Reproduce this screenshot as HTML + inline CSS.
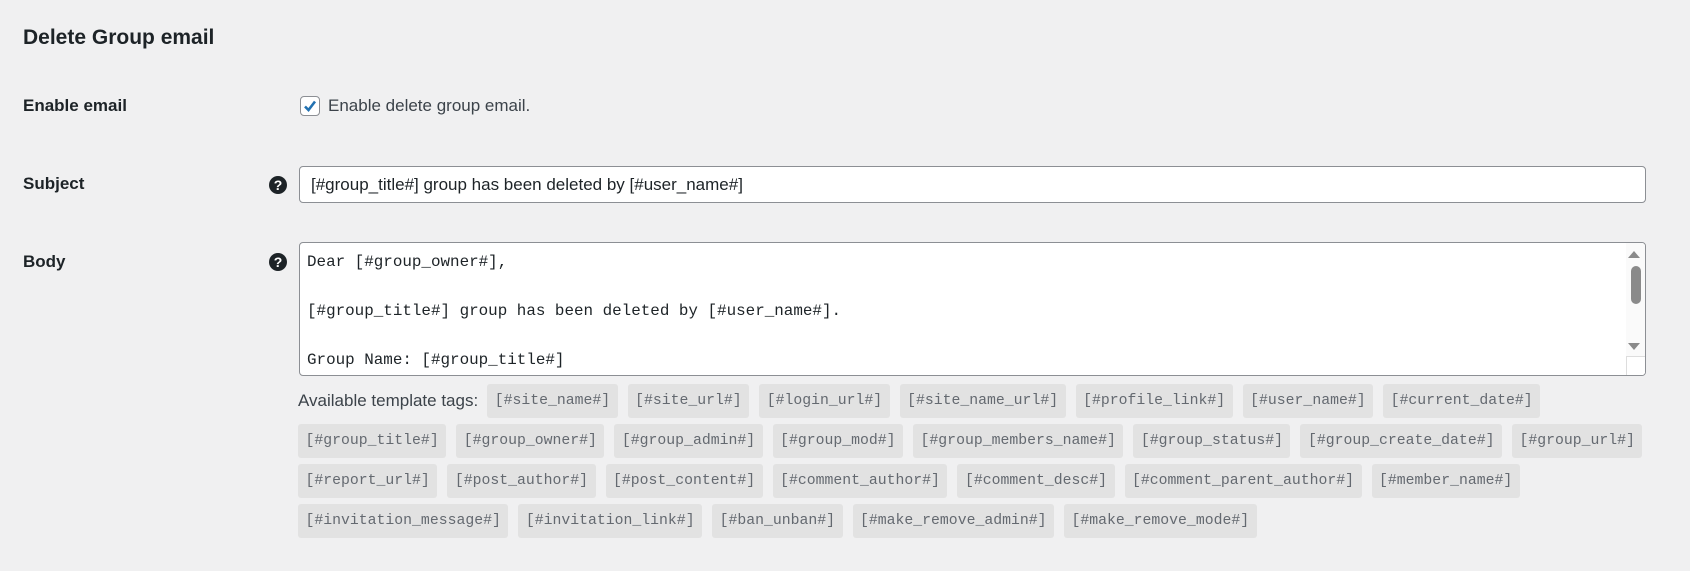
<!DOCTYPE html>
<html><head><meta charset="utf-8"><style>
body{margin:0;width:1690px;height:571px;background:#f0f0f1;font-family:"Liberation Sans",sans-serif;color:#1d2327;position:relative;overflow:hidden}
.a{position:absolute}
h2{position:absolute;left:23px;top:24px;margin:0;font-size:21px;font-weight:600;line-height:28px}
.lbl{position:absolute;left:23px;font-size:17px;font-weight:600;line-height:22px}
.help{position:absolute;width:18px;height:18px;border-radius:50%;background:#1d2327;color:#fff;font-size:14px;font-weight:700;text-align:center;line-height:18px}
.cb{left:300px;top:96px;width:18px;height:18px;border:1px solid #8c8f94;border-radius:4px;background:#fff}
.inp{left:299px;top:166px;width:1345px;height:35px;border:1px solid #8c8f94;border-radius:4px;background:#fff;font-size:17px;line-height:35px;box-sizing:content-box}
.ta{left:299px;top:242px;width:1345px;height:132px;border:1px solid #8c8f94;border-radius:4px;background:#fff;overflow:hidden}
.ta pre{margin:0;position:absolute;left:7px;top:7px;font-family:"Liberation Mono",monospace;font-size:15.9px;line-height:24.5px;color:#1d2327}
.tags{position:absolute;left:298px;top:384px;width:1350px;display:flex;flex-wrap:wrap;gap:6px 10px;align-items:center}
.tags span.t{background:#e2e2e2;border-radius:3px;height:34px;line-height:34px;padding:0 7.5px;font-family:"Liberation Mono",monospace;font-size:14.8px;color:#646970}
.tags span.l{font-size:17px;color:#3c434a;line-height:34px;margin-right:-1px}
</style></head><body>
<h2>Delete Group email</h2>
<div class="lbl" style="top:95px">Enable email</div>
<div class="a cb"><svg width="18" height="18" viewBox="0 0 18 18" style="position:absolute;left:0;top:0"><path d="M4 9.5 L7.5 13 L14 4.5" fill="none" stroke="#2271b1" stroke-width="2.6"/></svg></div>
<div class="a" style="left:328px;top:95px;font-size:17px;line-height:22px;color:#3c434a">Enable delete group email.</div>
<div class="lbl" style="top:173px">Subject</div>
<div class="help" style="left:269px;top:176px">?</div>
<div class="a inp"><span style="padding-left:11px">[#group_title#] group has been deleted by [#user_name#]</span></div>
<div class="lbl" style="top:251px">Body</div>
<div class="help" style="left:269px;top:253px">?</div>
<div class="a ta"><pre>Dear [#group_owner#],

[#group_title#] group has been deleted by [#user_name#].

Group Name: [#group_title#]</pre>
<div class="a" style="right:0;top:0;width:19px;height:132px;background:#fafafa"></div>
<div class="a" style="right:5px;top:8px;width:0;height:0;border-left:6px solid transparent;border-right:6px solid transparent;border-bottom:7px solid #8a8a8a"></div>
<div class="a" style="right:4px;top:23px;width:10px;height:38px;border-radius:5px;background:#8a8a8a"></div>
<div class="a" style="right:5px;top:100px;width:0;height:0;border-left:6px solid transparent;border-right:6px solid transparent;border-top:7px solid #8a8a8a"></div>
<div class="a" style="right:0;bottom:0;width:18px;height:18px;border-left:1px solid #ddd;border-top:1px solid #ddd;background:#fff"></div>
</div>
<div class="tags">
<span class="l">Available template tags:</span>
<span class="t">[#site_name#]</span><span class="t">[#site_url#]</span><span class="t">[#login_url#]</span><span class="t">[#site_name_url#]</span><span class="t">[#profile_link#]</span><span class="t">[#user_name#]</span><span class="t">[#current_date#]</span>
<span class="t">[#group_title#]</span><span class="t">[#group_owner#]</span><span class="t">[#group_admin#]</span><span class="t">[#group_mod#]</span><span class="t">[#group_members_name#]</span><span class="t">[#group_status#]</span><span class="t">[#group_create_date#]</span><span class="t">[#group_url#]</span>
<span class="t">[#report_url#]</span><span class="t">[#post_author#]</span><span class="t">[#post_content#]</span><span class="t">[#comment_author#]</span><span class="t">[#comment_desc#]</span><span class="t">[#comment_parent_author#]</span><span class="t">[#member_name#]</span>
<span class="t">[#invitation_message#]</span><span class="t">[#invitation_link#]</span><span class="t">[#ban_unban#]</span><span class="t">[#make_remove_admin#]</span><span class="t">[#make_remove_mode#]</span>
</div>
</body></html>
